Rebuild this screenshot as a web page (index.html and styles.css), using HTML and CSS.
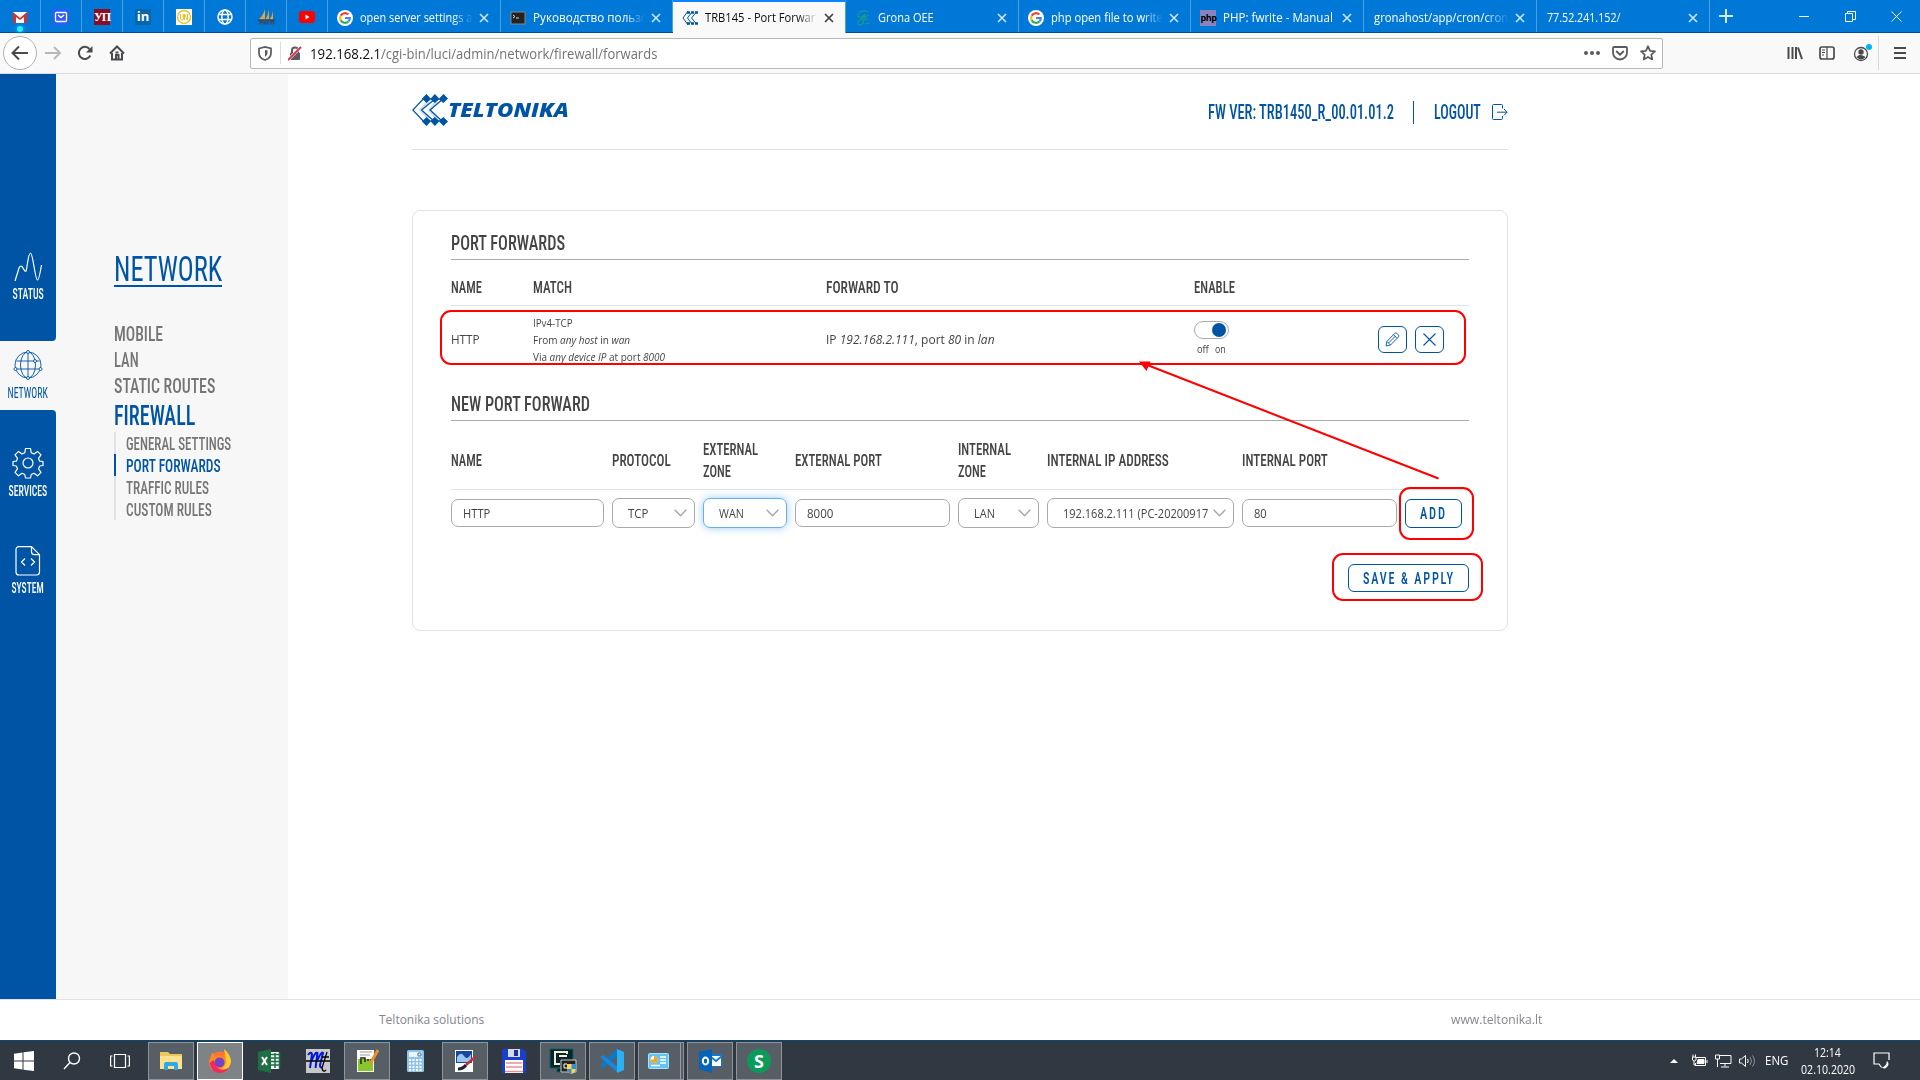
FILE: index.html
```html
<!DOCTYPE html>
<html lang="en">
<head>
<meta charset="utf-8">
<title>TRB145 - Port Forwards</title>
<link rel="stylesheet" href="styles.css">
</head>
<body>
<header class="tabs">
  <div class="pin"><svg width="16" height="16" viewBox="0 0 16 16"><path fill="#fff" d="M1 3h14v11H1z"/><path fill="#d93025" d="M1 3l7 6 7-6v11h-3V8l-4 3-4-3v6H1z"/></svg><i class="glow"></i></div>
  <div class="pin"><svg width="16" height="16" viewBox="0 0 16 16"><rect width="16" height="16" fill="#2a5cff"/><rect x="2.5" y="3.5" width="11" height="9" rx="1" fill="none" stroke="#fff" stroke-width="1.3"/><path d="M5 6l3 2.500 3-2.500" fill="none" stroke="#fff" stroke-width="1.500"/></svg></div>
  <div class="pin"><b class="up">УП</b></div>
  <div class="pin"><b class="in">in</b></div>
  <div class="pin"><svg width="16" height="16" viewBox="0 0 16 16"><rect width="16" height="16" fill="#fff"/><circle cx="8" cy="8" r="6.500" fill="none" stroke="#f0c020" stroke-width="1.400"/><path d="M4.500 5v4q0 2 1.500 2t1.500-2V5M8.500 11V5l3 6V5" fill="none" stroke="#f0c020"/></svg></div>
  <div class="pin"><svg width="16" height="16" viewBox="0 0 16 16" fill="none" stroke="#fff" stroke-width="1.500"><circle cx="8" cy="8" r="7"/><ellipse cx="8" cy="8" rx="3.200" ry="7"/><path d="M1.500 5.500h13M1.500 10.500h13"/></svg></div>
  <div class="pin"><svg width="17" height="16" viewBox="0 0 17 16"><path fill="#f0a030" d="M7 0v10H1q4-3 6-10zM11 0v10H7.700q2.500-4 3.300-10zM15 2v8h-3.300q2.500-3 3.300-8z"/><path d="M0 11.500h17M2 15.500v-3h2v2M6 15.500v-2h2v2M10 12v3.500M13 15.500v-3h2.500v3" stroke="#3c4660" stroke-width="1.300" fill="none"/></svg></div>
  <div class="pin"><svg width="16" height="16" viewBox="0 0 16 16"><rect y="2" width="16" height="12" rx="3" fill="#f00"/><path fill="#fff" d="M6.500 5.500v5L10.500 8z"/></svg></div>
  <div class="tab"><svg class="fav" viewBox="0 0 16 16"><circle cx="8" cy="8" r="8" fill="#fff"/><g fill="none" stroke-width="2.200"><path stroke="#ea4335" d="M3.700 5.800A4.800 4.800 0 0 1 11.400 4.600"/><path stroke="#fbbc05" d="M3.700 5.800a4.800 4.800 0 0 0 0 4.400"/><path stroke="#34a853" d="M3.700 10.200a4.800 4.800 0 0 0 7.700 1.200"/><path stroke="#4285f4" d="M11.400 11.400A4.800 4.800 0 0 0 12.800 8H8"/></g></svg><div class="tt"><span class="f" data-w="112">open server settings a</span></div><svg class="x" viewBox="0 0 10 10"><path d="M1 1l8 8M9 1L1 9"/></svg></div>
  <div class="tab"><svg class="fav" viewBox="0 0 16 16"><rect x="1" y="2" width="14" height="12" fill="#222" stroke="#888"/><path d="M3 5l2 1.500L3 8M6 8h3" stroke="#ddd" fill="none"/></svg><div class="tt"><span class="f" data-w="115">Руководство пользо</span></div><svg class="x" viewBox="0 0 10 10"><path d="M1 1l8 8M9 1L1 9"/></svg></div>
  <div class="tab on"><svg class="fav" viewBox="0 0 16 16" fill="none" stroke="#0054a6"><path d="M6 1L1 8l5 7M10 2L5.500 8l4.500 6M14 2.500L9.500 8l4.500 5.500"/><path d="M5 2.500h11M5 13.500h11" stroke-width="2.500" stroke-dasharray="3 1"/></svg><div class="tt"><span class="f" data-w="110">TRB145 - Port Forwar</span></div><svg class="x" viewBox="0 0 10 10"><path d="M1 1l8 8M9 1L1 9"/></svg></div>
  <div class="tab"><svg class="fav" viewBox="0 0 16 16" fill="none" stroke="#1a9a8c" stroke-width="1.200"><path d="M13 2C7-1 2 3 3 6c1 2 5 1 7-2-1 4-3 5-5 6-3 2-3 5 0 5s4-3 3-5l5-1M10 14l5-1M9 8l4-3"/></svg><div class="tt"><span class="f" data-w="56">Grona OEE</span></div><svg class="x" viewBox="0 0 10 10"><path d="M1 1l8 8M9 1L1 9"/></svg></div>
  <div class="tab"><svg class="fav" viewBox="0 0 16 16"><circle cx="8" cy="8" r="8" fill="#fff"/><g fill="none" stroke-width="2.200"><path stroke="#ea4335" d="M3.700 5.800A4.800 4.800 0 0 1 11.400 4.600"/><path stroke="#fbbc05" d="M3.700 5.800a4.800 4.800 0 0 0 0 4.400"/><path stroke="#34a853" d="M3.700 10.200a4.800 4.800 0 0 0 7.700 1.200"/><path stroke="#4285f4" d="M11.400 11.400A4.800 4.800 0 0 0 12.800 8H8"/></g></svg><div class="tt"><span class="f" data-w="112">php open file to write</span></div><svg class="x" viewBox="0 0 10 10"><path d="M1 1l8 8M9 1L1 9"/></svg></div>
  <div class="tab"><b class="fav php">php</b><div class="tt full"><span class="f" data-w="110">PHP: fwrite - Manual</span></div><svg class="x" viewBox="0 0 10 10"><path d="M1 1l8 8M9 1L1 9"/></svg></div>
  <div class="tab"><div class="tt"><span class="f" data-w="134">gronahost/app/cron/cron</span></div><svg class="x" viewBox="0 0 10 10"><path d="M1 1l8 8M9 1L1 9"/></svg></div>
  <div class="tab"><div class="tt"><span class="f" data-w="73">77.52.241.152/</span></div><svg class="x" viewBox="0 0 10 10"><path d="M1 1l8 8M9 1L1 9"/></svg></div>
  <svg class="plus" width="14" height="14" viewBox="0 0 14 14"><path d="M7 0v14M0 7h14"/></svg>
  <div class="win">
    <svg width="11" height="11" viewBox="0 0 11 11"><path d="M0 5.500h10"/></svg>
    <svg width="11" height="11" viewBox="0 0 11 11"><path d="M.5 2.500h7v8h-7zM2.500 2.500v-2h8v8h-3"/></svg>
    <svg width="11" height="11" viewBox="0 0 11 11"><path d="M.5.5l10 10M10.500.5l-10 10"/></svg>
  </div>
</header>

<nav class="bar">
  <div class="back"><svg width="18" height="16" viewBox="0 0 18 16"><path d="M17 8H2M8 1.500L1.500 8 8 14.500"/></svg></div>
  <svg class="fwd" width="18" height="16" viewBox="0 0 18 16"><path d="M1 8h15M10 2l6 6-6 6"/></svg>
  <svg class="reload" width="16" height="16" viewBox="0 0 16 16"><path d="M13.300 10.500A6 6 0 1 1 12.500 4"/><path d="M15.500 1v6.500H9z" fill="#4a4a4c" stroke="none"/></svg>
  <svg class="home" width="16" height="16" viewBox="0 0 16 16"><path d="M1 8.500L8 1.500l7 7M3 8v6.500h10V8M7 14v-4h2.500v4M6.500 7.500h3"/></svg>
  <div class="url">
    <svg width="14" height="15" viewBox="0 0 14 15"><path d="M1 2.500L7 1l6 1.500V7q0 5-6 7-6-2-6-7z" fill="none" stroke="#5a5a5c" stroke-width="1.700"/><path d="M7 4v7q2.500-1.500 2.500-4V4.500z" fill="#5a5a5c"/></svg>
    <i></i>
    <svg width="14" height="15" viewBox="0 0 14 15"><path d="M4 7V4.500a3 3 0 0 1 6 0V7" fill="none" stroke="#5a5a5c" stroke-width="2"/><rect x="2" y="6.500" width="10" height="7.500" rx="1" fill="#5a5a5c"/><path d="M0 14L13 1" stroke="#fff" stroke-width="3"/><path d="M0 14L13 1" stroke="#e22850" stroke-width="1.800"/></svg>
    <p><span class="f host" data-w="71">192.168.2.1</span><span class="f" data-w="276">/cgi-bin/luci/admin/network/firewall/forwards</span></p>
    <svg width="16" height="16" viewBox="0 0 16 16" fill="#5a5a5c"><circle cx="2" cy="8" r="2"/><circle cx="8" cy="8" r="2"/><circle cx="14" cy="8" r="2"/></svg>
    <svg width="16" height="16" viewBox="0 0 16 16" fill="none" stroke="#5a5a5c" stroke-width="1.800"><path d="M2 2h12q1 0 1 1v4.500a7 7 0 0 1-14 0V3q0-1 1-1zM4.700 6.500L8 9.700l3.300-3.200" stroke-linecap="round"/></svg>
    <svg width="16" height="16" viewBox="0 0 16 16" fill="none" stroke="#5a5a5c" stroke-width="1.700" stroke-linejoin="round"><path d="M8 1.200l2 4.600 5 .5-3.700 3.300 1 4.900L8 12l-4.300 2.500 1-4.900L1 6.300l5-.5z"/></svg>
  </div>
  <div class="tools">
    <svg width="16" height="16" viewBox="0 0 16 16" fill="none" stroke="#4a4a4c" stroke-width="2"><path d="M1.500 2v12M5.500 2v12M9 2v12M11 2.500l4 11.500"/></svg>
    <svg width="16" height="16" viewBox="0 0 16 16" fill="none" stroke="#4a4a4c" stroke-width="1.700"><rect x="1" y="2" width="14" height="12" rx="2"/><path d="M8 2v12M3 5h3M3 7.500h3M3 10h2" stroke-width="1.200"/></svg>
    <svg width="22" height="22" viewBox="0 0 22 22"><circle cx="10" cy="12" r="6.500" fill="none" stroke="#4a4a4c" stroke-width="1.300"/><circle cx="10" cy="10" r="2.700" fill="#4a4a4c"/><path d="M5.500 15q2-2.500 4.500-2t4.500 2q-4.500 5-9 0z" fill="#4a4a4c"/><circle cx="18" cy="5" r="3" fill="#00b3f4"/></svg>
    <i></i>
    <svg width="13" height="14" viewBox="0 0 13 14" stroke="#4a4a4c" stroke-width="2"><path d="M0 2h12M0 7h12M0 12h12"/></svg>
  </div>
</nav>

<div class="page">
  <aside class="rail">
    <div class="rtop"><svg width="30" height="30" viewBox="0 0 30 30"><path d="M2 29L6 16Q8 12 10 16T13 19C14 18 15 1 17.500 1S22 28 24.500 28Q26 28 28.500 13"/></svg><span class="f o" data-w="31">STATUS</span></div>
    <div class="rmid"><svg width="30" height="30" viewBox="0 0 30 30"><circle cx="15" cy="15" r="13"/><ellipse cx="15" cy="15" rx="7.500" ry="13"/><path d="M15 2v26M3.500 11h23M3 19h24"/><g fill="#f7f7f7"><circle cx="15" cy="2" r="1.500"/><circle cx="15" cy="28" r="1.500"/><circle cx="2.500" cy="19" r="1.500"/><circle cx="27.500" cy="19" r="1.500"/><circle cx="22" cy="11" r="1.500"/></g></svg><span class="f o" data-w="40">NETWORK</span></div>
    <div class="rbot">
      <div><svg width="32" height="32" viewBox="-16 -16 32 32"><path stroke-linejoin="round" d="M-2.500-14.500h5l.7 4.200 2.800 1.200 3.500-2.500 3.500 3.500-2.500 3.500 1.200 2.800 3.300.3v4l-3.300.5-1.200 2.800 2.500 3.500-3.500 3.500-3.500-2.500-2.800 1.200-.7 3.500h-5l-.7-3.500-2.800-1.200-3.500 2.500-3.500-3.500 2.500-3.500-1.200-2.800-3.300-.5v-4l3.300-.3 1.200-2.800-2.500-3.500 3.500-3.500 3.500 2.500 2.800-1.200z"/><circle r="5"/></svg><span class="f o" data-w="39">SERVICES</span></div>
      <div><svg width="32" height="30" viewBox="0 0 32 30"><path d="M7 .7h12.500l8 8V26q0 3-3 3H7q-3 0-3-3V3.700Q4 .7 7 .7zM19.500.7v5q0 3 3 3h5M13 12.500L9.500 16l3.500 3.500M19 12.500l3.500 3.500-3.500 3.500"/></svg><span class="f o" data-w="32">SYSTEM</span></div>
    </div>
  </aside>
  <aside class="menu">
    <h1><span class="f o" data-w="108">NETWORK</span></h1>
    <ul>
      <li><span class="f o" data-w="49">MOBILE</span></li>
      <li><span class="f o" data-w="25">LAN</span></li>
      <li><span class="f o" data-w="101">STATIC ROUTES</span></li>
      <li class="big"><span class="f o" data-w="81">FIREWALL</span></li>
    </ul>
    <ul class="sub">
      <li><span class="f o" data-w="105">GENERAL SETTINGS</span></li>
      <li class="cur"><span class="f o" data-w="95">PORT FORWARDS</span></li>
      <li><span class="f o" data-w="83">TRAFFIC RULES</span></li>
      <li><span class="f o" data-w="86">CUSTOM RULES</span></li>
    </ul>
  </aside>
  <main>
    <div class="head">
      <div class="logo">
        <svg width="38" height="32" viewBox="0 0 38 32" fill="none" stroke="#0054a6"><path d="M15 1L.8 16 15 31M23 5L9.500 16 23 28M31 5L18 16l13 12" stroke-width="1.200"/><g fill="#0054a6" stroke="none"><path d="M14.500 0l4.200 4.500 4.200-4.500 4.200 4.500L31.500 0 36 4.500 31.500 9 27 5.500 22.800 9l-4.200-3.500L14.500 9 10 4.500zM14.500 32l4.200-4.500 4.200 4.500 4.200-4.500 4.400 4.500 4.500-4.500-4.500-4.500-4.500 3.500-4.200-3.500-4.200 3.500-4.100-3.500-4.500 4.500z"/><path d="M14 8h4l-7 8 7 8h-4l-7-8zM22.500 8h4l-7 8 7 8h-4l-7-8z" opacity=".2"/></g></svg>
        <span class="f" data-w="121">TELTONIKA</span>
      </div>
      <div class="ver"><span class="f o" data-w="186">FW VER: TRB1450_R_00.01.01.2</span><i></i><span class="f o" data-w="47">LOGOUT</span><svg width="16" height="16" viewBox="0 0 16 16" fill="none" stroke="#0054a6"><path d="M10.500 4.500v-3q0-1-1-1h-8q-1 0-1 1v13q0 1 1 1h8q1 0 1-1V12M5 8.200h10M12 5l3 3.200-3 3.200"/></svg></div>
    </div>
    <section class="card">
      <h2><span class="f o" data-w="114">PORT FORWARDS</span></h2>
      <div class="rules th"><span class="f o" data-w="31">NAME</span><span class="f o" data-w="39">MATCH</span><span class="f o" data-w="73">FORWARD TO</span><span class="f o" data-w="41">ENABLE</span></div>
      <div class="rules tr">
        <div><span class="f" data-w="29">HTTP</span></div>
        <div class="match"><p><span class="f" data-w="40">IPv4-TCP</span></p><p><span class="f" data-w="97">From <em>any host</em> in <em>wan</em></span></p><p><span class="f" data-w="132">Via <em>any device IP</em> at port <em>8000</em></span></p></div>
        <div><span class="f" data-w="169">IP <em>192.168.2.111</em>, port <em>80</em> in <em>lan</em></span></div>
        <div class="sw"><b><i></i></b><p><span class="f" data-w="11.500">off</span><span class="f" data-w="11">on</span></p></div>
        <div class="acts">
          <button class="btn"><svg width="15" height="15" viewBox="0 0 15 15"><path d="M1 14l.8-4.500L10 1.200q.8-.7 1.600 0l2 2q.7.800 0 1.600L5.500 13zM2 9.500L5.500 13M8.500 2.700l3.700 3.700M3.500 11l7-7"/></svg></button>
          <button class="btn"><svg width="15" height="15" viewBox="0 0 15 15"><path d="M1.500 1.500l12 12M13.500 1.500l-12 12" stroke-width="1.100"/></svg></button>
        </div>
      </div>
      <h2 class="new"><span class="f o" data-w="139">NEW PORT FORWARD</span></h2>
      <div class="form th"><span class="f o" data-w="31">NAME</span><span class="f o" data-w="59">PROTOCOL</span><div><span class="f o" data-w="55">EXTERNAL</span><span class="f o" data-w="28">ZONE</span></div><span class="f o" data-w="87">EXTERNAL PORT</span><div><span class="f o" data-w="53">INTERNAL</span><span class="f o" data-w="28">ZONE</span></div><span class="f o" data-w="122">INTERNAL IP ADDRESS</span><span class="f o" data-w="86">INTERNAL PORT</span></div>
      <div class="form fields">
        <div class="inp"><span class="f" data-w="27">HTTP</span></div>
        <div class="sel"><span class="f" data-w="20">TCP</span><svg viewBox="0 0 13 8"><path d="M.7.700l5.800 6 5.800-6"/></svg></div>
        <div class="sel focus"><span class="f" data-w="25">WAN</span><svg viewBox="0 0 13 8"><path d="M.7.700l5.800 6 5.800-6"/></svg></div>
        <div class="inp"><span class="f" data-w="26">8000</span></div>
        <div class="sel"><span class="f" data-w="21">LAN</span><svg viewBox="0 0 13 8"><path d="M.7.700l5.800 6 5.800-6"/></svg></div>
        <div class="sel"><span class="f" data-w="145">192.168.2.111 (PC-20200917</span><svg viewBox="0 0 13 8"><path d="M.7.700l5.800 6 5.800-6"/></svg></div>
        <div class="inp"><span class="f" data-w="13">80</span></div>
        <button class="btn add"><span class="f o" data-w="27">ADD</span></button>
      </div>
      <div class="save"><button class="btn"><span class="f o" data-w="92">SAVE &amp; APPLY</span></button></div>
    </section>
  </main>
</div>
<footer><span class="f" data-w="105">Teltonika solutions</span><span class="f" data-w="91">www.teltonika.lt</span></footer>

<div class="task">
  <div class="slot"><svg width="20" height="20" viewBox="0 0 20 20" fill="#fff"><path d="M0 2.800L8.500 1.500v8H0zM9.500 1.300L20 0v9.500H9.500zM0 10.500h8.500v8L0 17.200zM9.500 10.500H20V20L9.500 18.700z"/></svg></div>
  <div class="slot s2"><svg width="18" height="18" viewBox="0 0 18 18" fill="none" stroke="#fff" stroke-width="1.400"><circle cx="11" cy="6.500" r="5.500"/><path d="M7 10.500L1 17"/></svg></div>
  <div class="slot s3"><svg width="20" height="16" viewBox="0 0 20 16" fill="none" stroke="#fff" stroke-width="1.200"><path d="M4.500 1.500h11v13h-11zM2.500 3H.6v10h1.900M17.500 3h1.900v10h-1.900"/></svg></div>
  <div class="slot app"><svg width="24" height="24" viewBox="0 0 24 24"><path fill="#ecc75c" d="M1 3h8l2 2h12v15H1z"/><path fill="#ffe28d" d="M1 7h22v13H1z"/><path fill="#2fa8e5" d="M5 21v-6q0-2 2-2h10q2 0 2 2v6h-4v-4H9v4z"/></svg></div>
  <div class="slot app act"><svg width="24" height="24" viewBox="0 0 24 24"><circle cx="12" cy="13" r="10.500" fill="#ff7139"/><path d="M3 7Q4 3 5 4l3 4 3-2 4 3q2-6 1-9 6 5 6.500 12-1 9-10 11Q1 23 1 12z" fill="#ff8a1f"/><path d="M16 0q2 6 2 13-1 6-6 7 8 4 11-7Q23 6 16 0z" fill="#ffcb2e"/><circle cx="11.500" cy="13.500" r="5" fill="#7542c9"/><path d="M1.500 14q2 10 11 10 6-1 8-5-11 6-15-8z" fill="#f5275d"/></svg></div>
  <div class="slot"><svg width="24" height="24" viewBox="0 0 24 24"><path fill="#f4f8f5" d="M12 3h11v17H12z"/><path stroke="#1d7044" stroke-width="1.500" d="M13 5.500h9M13 9h9M13 12.500h9M13 16h9M18 4v15M22.500 3v17" fill="none"/><path fill="#1d7044" d="M1 3l13-3v24L1 21z"/><path d="M5 8l5 8M10 8l-5 8" stroke="#fff" stroke-width="2"/></svg></div>
  <div class="slot"><svg width="24" height="24" viewBox="0 0 24 24"><path fill="#c8c8c8" d="M0 0h24v24H0z"/><path d="M2 6q3-4 4-1L4 19M5.500 12q4-10 6-8L9.500 19M11.500 11q4-9 5.500-7l-3 12q0 3 2 2" stroke="#0018d8" stroke-width="2" fill="none"/><path d="M0 12h24M21 3l-5 16q1 5 4 2M16 8h7" stroke="#000" stroke-width="1.300" fill="none"/></svg></div>
  <div class="slot app"><svg width="24" height="24" viewBox="0 0 24 24"><path fill="#fff" d="M2 1h17v22H2z"/><path fill="#87c72c" d="M3 10h15v12H3z"/><path d="M5 3h12M5 6h10" stroke="#999"/><path d="M6 8v7M7 9h3v4M13 10v2M16 10v2" stroke="#222" fill="none" stroke-width="1.500"/><path d="M23 1l-8 14" stroke="#e8932a" stroke-width="3"/></svg></div>
  <div class="slot"><svg width="20" height="24" viewBox="0 0 20 24"><rect x="1" y="1" width="17" height="22" rx="1.500" fill="#8dc4e8"/><path fill="#e8f5ff" d="M3 3h13v5H3z"/><path d="M3 11h13M3 14.500h13M3 18h13M3 21h13" stroke="#fff" stroke-width="2" stroke-dasharray="2 1.500"/><path d="M12 4h3v3h-3z" fill="none" stroke="#3a7bb0"/></svg></div>
  <div class="slot app"><svg width="24" height="24" viewBox="0 0 24 24"><path fill="#fff" d="M2 1h18v22H2z"/><path fill="#1747a0" d="M3 2h16v12H3z"/><path d="M4 8q4-6 7-1t7-2v8H4z" fill="#9cc6ee"/><path d="M5 20q5 0 8-4" stroke="#223" stroke-width="3" fill="none"/><path d="M22 8l-9 8" stroke="#c53030" stroke-width="2.500"/></svg></div>
  <div class="slot disk"><svg width="24" height="24" viewBox="0 0 24 24"><path fill="#1a3fd0" d="M0 0h21l3 3v21H0z"/><path fill="#d8d8e0" d="M6 0h12v8H6z"/><path fill="#1a2f90" d="M12 1h4v6h-4z"/><path fill="#fff" d="M3 11h18v13H3z"/><path d="M4 14h16M4 18h16M3 22.500h18" stroke="#e88f98" stroke-width="1.600"/></svg></div>
  <div class="slot app"><svg width="28" height="28" viewBox="0 0 28 28"><path fill="#06262c" stroke="#0d5f66" d="M1 2h23v19H1zM8 21h8v4H8z"/><path d="M18 7V5H6v12h5M10 9h8" stroke="#f4f0d8" stroke-width="2" fill="none"/><path fill="#222" stroke="#ccc" d="M12 13h15v12H12z"/><path d="M18 17h-3v4h3" stroke="#fff" fill="none"/><path d="M18 17h9v5q-1 4-4.500 5-4-1-4.500-5z" fill="#ffd84a"/><path d="M22.500 17H27v5h-4.500zM18 22h4.500v5Q19 26 18 22z" fill="#2e90df"/></svg></div>
  <div class="slot app"><svg width="24" height="24" viewBox="0 0 24 24"><path fill="#0a79c8" d="M17 0v7L3 19l-3-3z"/><path fill="#1687dc" d="M0 8l3-2 15 12v6z"/><path fill="#2cb0f5" d="M17 0l7 3v18l-7 3z"/></svg></div>
  <div class="slot app stack"><svg width="22" height="18" viewBox="0 0 22 18"><rect x=".5" y="1.500" width="20" height="15" rx="1" fill="#66c5f0" stroke="#a8e0ff"/><circle cx="6" cy="7.500" r="3.500" fill="#fff"/><path d="M6 7.500V4a3.500 3.500 0 1 1-3.500 3.500z" fill="#f4a51c"/><path d="M12 5h6M12 8h6M12 11h6M3 13.500h9" stroke="#fff" stroke-width="1.500"/></svg><i></i></div>
  <div class="slot app"><svg width="24" height="24" viewBox="0 0 24 24"><path fill="#0f7ad4" d="M12 5h12v13H12z"/><path fill="#fff" d="M13 7h10v10H13z"/><path d="M13 8l5 4 6-5" stroke="#0f7ad4" stroke-width="1.800" fill="none"/><path fill="#0364b8" d="M1 3l13-3v24L1 20z"/><ellipse cx="7.500" cy="12" rx="2.700" ry="3.500" fill="none" stroke="#fff" stroke-width="2"/></svg></div>
  <div class="slot app"><b class="s">S</b></div>
  <div class="tray">
    <svg width="8" height="5" viewBox="0 0 8 5"><path fill="#fff" d="M0 5l4-4 4 4z"/></svg>
    <svg width="17" height="14" viewBox="0 0 17 14" fill="none" stroke="#fff"><path d="M5 3.500h9.500v8H4.500V9M16 6v3M1.500 3v3q2 2 3.500 0V3zM2 3V.5M4.500 3V.5M3 7v4h2"/><path fill="#fff" d="M7 5.500h6v4H6z"/></svg>
    <svg width="17" height="14" viewBox="0 0 17 14" fill="none" stroke="#fff"><path d="M5 1.500h11v8H5M.5 1h4v4h-4zM2.500 5v8M10 9.500v3M6 13h8" /></svg>
    <svg width="17" height="14" viewBox="0 0 17 14" fill="none" stroke="#fff"><path d="M.5 5h2l4-3.500v11L2.500 9h-2zM8.500 5q1.500 2 0 4"/><path d="M11 3q3 4 0 8M13.500 1.500q4 5.500 0 11" opacity=".45"/></svg>
    <span class="f" data-w="23">ENG</span>
    <div class="clock"><span class="f" data-w="27">12:14</span><span class="f" data-w="54">02.10.2020</span></div>
    <svg width="17" height="17" viewBox="0 0 17 17" fill="none" stroke="#fff" stroke-width="1.200"><path d="M16 8V1H1v11h5l2.500 3.500"/><path fill="#fff" stroke="none" d="M14 9q3 3 0 6t-5 0q4 0 5-6z"/></svg>
  </div>
</div>

<svg class="marks" width="1920" height="1080" viewBox="0 0 1920 1080"><g fill="none" stroke="#f00" stroke-width="2"><rect x="441" y="311" width="1024" height="53" rx="10"/><rect x="1400" y="488" width="73" height="51" rx="10"/><rect x="1333" y="554" width="149" height="46" rx="10"/><path d="M1438.500 478.500L1146 364.500"/></g><path fill="#f00" d="M1139 361.500l11.500 0-4 9.500z"/></svg>
<script src="fit.js"></script>
</body>
</html>
```
FILE: styles.css
```css
* { box-sizing: border-box; margin: 0; padding: 0; }
body { width: 1920px; height: 1080px; overflow: hidden; background: #fff; font: 12px/17px "Open Sans", "Noto Sans", sans-serif; color: #444; }
ul { list-style: none; }
svg { display: block; flex: none; }
.f { display: inline-block; white-space: pre; transform-origin: 0 50%; flex: none; justify-self: start; }
.o { font-family: Roboto, "Liberation Sans", sans-serif; font-stretch: 75%; font-weight: 500; }

.tabs { height: 33px; background: #0078d7; border-bottom: 1px solid #00508f; display: flex; align-items: stretch; color: #fff; }
.pin { position: relative; width: 41px; border-right: 1px solid #4ba0e4; display: flex; align-items: center; justify-content: center; padding-top: 2px; }
.glow { position: absolute; left: 17px; bottom: 0; width: 6px; height: 6px; border-radius: 50%; background: #2fe6f5; box-shadow: 0 0 4px #00d0ff; }
.up, .in { width: 16px; height: 16px; background: #8c0d22; font: 700 12px/16px "Liberation Serif", serif; text-align: center; letter-spacing: -1px; }
.in { background: #0a66a8; font: 700 13px/15px "Open Sans", sans-serif; letter-spacing: 0; }
.tab { width: 172.7px; border-right: 1px solid #4ba0e4; display: flex; align-items: center; padding: 3px 11px 0 9px; gap: 6px; }
.fav { width: 16px; height: 16px; flex: none; }
.php { background: #8783bd; color: #000; font: 700 9px/15px "Open Sans", sans-serif; text-align: center; letter-spacing: -.5px; }
.tt { flex: 1; min-width: 0; overflow: hidden; padding-left: 1px; height: 20px; line-height: 20px; -webkit-mask-image: linear-gradient(90deg, #000 82%, transparent); mask-image: linear-gradient(90deg, #000 82%, transparent); }
.tt.full { -webkit-mask-image: none; mask-image: none; }
.x { width: 10px; height: 10px; stroke: #cfe5f8; stroke-width: 1.600; }
.on { background: #f9f9fa; color: #0c0c0d; border-top: 2px solid #0a84ff; padding-top: 1px; height: 33px; }
.on .x { stroke: #3a3a3c; }
.plus { margin: 9px 0 0 9px; stroke: #d5e8f8; stroke-width: 2; }
.win { margin-left: auto; display: flex; gap: 35px; padding: 11px 18px 0 0; }
.win svg { fill: none; stroke: #fff; }

.bar { height: 41px; background: #f9f9fa; border-bottom: 1px solid #dcdcde; display: flex; align-items: center; }
.back { width: 34px; height: 34px; margin-left: 3px; border: 1px solid #b1b1b3; border-radius: 50%; background: #fff; display: grid; place-items: center; }
.bar > svg, .back svg { fill: none; stroke: #4a4a4c; stroke-width: 2; }
.bar > .fwd { margin-left: 7px; stroke: #b8b8ba; }
.reload { margin-left: 15px; }
.home { margin-left: 16px; }
.url { width: 1413px; height: 31px; margin-left: 125px; border: 1px solid #b8b8ba; border-radius: 2px; background: #fff; display: flex; align-items: center; padding: 0 6px 0 7px; gap: 12px; }
.url i { width: 1px; height: 22px; background: #dcdcde; margin: 0 -5px 0 -4px; }
.url p { flex: 1; margin-left: -4px; font-size: 14px; color: #737375; white-space: nowrap; }
.url .host { color: #0c0c0d; }
.tools { margin-left: auto; display: flex; align-items: center; gap: 16px; padding-right: 13px; }
.tools i { width: 1px; height: 34px; background: #d8d8da; margin: 0 -1px 0 -11px; }

.page { height: 925px; display: flex; }
.rail { width: 56px; background: #f7f7f7; display: flex; flex-direction: column; font-size: 14px; color: #fff; }
.rail > div, .rbot > div { display: flex; flex-direction: column; align-items: center; }
.rail svg { fill: none; stroke: #fff; stroke-width: 1.200; }
.rail .f { line-height: 16px; font-weight: 500; transform-origin: 50% 50%; }
.rail .rtop { height: 267px; background: #0054a6; border-radius: 0 0 4px 0; padding-top: 178px; gap: 4px; }
.rail .rmid { height: 69px; color: #0054a6; padding-top: 9px; gap: 5px; }
.rail .rmid .f { font-weight: 400; }
.rail .rmid svg { stroke: #0054a6; stroke-width: .9; }
.rail .rbot { flex: 1; background: #0054a6; border-radius: 0 4px 0 0; padding-top: 37px; gap: 47px; }
.rbot > div { gap: 4px; }
.menu { width: 232px; background: #f7f7f7; padding: 175px 0 0 58px; color: #757575; }
.menu h1 { width: 108px; height: 38px; border-bottom: 2px solid #0054a6; color: #0054a6; font-size: 35px; line-height: 38px; font-weight: 400; margin-bottom: 34px; }
.menu h1 .f { font-weight: 400; }
.menu li { height: 26px; line-height: 24px; font-size: 21px; }
.menu .big { height: 33px; line-height: 31px; font-size: 27px; color: #0054a6; }
.menu .sub { border-left: 2px solid #e2e2e2; }
.sub li { height: 22px; line-height: 22px; font-size: 17.500px; padding-left: 10px; }
.sub .cur { color: #0054a6; border-left: 2px solid #0054a6; margin-left: -2px; }

main { width: 1096px; margin-left: 124px; }
.head { height: 76px; border-bottom: 1px solid #e2e2e2; display: flex; justify-content: space-between; }
.logo { display: flex; align-items: center; height: 32px; margin-top: 20px; color: #0054a6; font: italic 800 19px/32px "Open Sans", sans-serif; }
.logo .f { margin-left: -2px; }
.ver { display: flex; height: 24px; margin-top: 26px; line-height: 24px; font-size: 20px; color: #0054a6; align-items: center; }
.ver i { width: 1px; height: 23px; background: #0054a6; margin: 0 20px 0 19px; }
.ver svg { margin-left: 11px; }
.card { margin-top: 60px; height: 421px; border: 1px solid #e4e4e4; border-radius: 8px; padding: 14px 38px 0; }
.card h2 { height: 35px; border-bottom: 1px solid #a9a9a9; font-size: 21px; line-height: 34px; font-weight: 400; }
.th { font-size: 17px; line-height: 22px; border-bottom: 1px solid #e2e2e2; align-items: center; }
.rules { display: grid; grid-template-columns: 82px 293px 368px 184px 1fr; }
.rules.th { height: 46px; align-items: start; padding-top: 16px; }
.rules.tr { height: 66px; align-items: center; font-size: 12.500px; }
.match { font-size: 10.500px; margin-top: 2px; }
.match p, .sw p { display: flex; }
.sw b { display: block; width: 35px; height: 18px; border: 1px solid #aaa; border-radius: 9px; padding: 1px 2px; }
.sw i { display: block; margin-left: auto; width: 14px; height: 14px; border-radius: 50%; background: #0054a6; }
.sw p { gap: 6px; padding: 2px 0 0 3px; font-size: 10.500px; }
.acts { display: flex; gap: 8px; }
.btn { height: 28px; border: 1px solid #0054a6; border-radius: 6px; background: #fff; color: #0054a6; display: flex; align-items: center; justify-content: center; font-size: 17px; line-height: 20px; }
.acts .btn { width: 29px; height: 27px; }
.acts svg { fill: none; stroke: #0054a6; stroke-width: .9; }
.card .new { margin-top: 14px; }
.form { display: grid; grid-template-columns: 153px 83px 84px 155px 81px 187px 155px 57px; column-gap: 8px; }
.form.th { height: 69px; padding-top: 10px; }
.form.th div { display: flex; flex-direction: column; }
.form.th div .f { align-self: flex-start; }
.fields { padding-top: 8px; align-items: center; }
.inp, .sel { height: 28px; border: 1px solid #a9a9a9; border-radius: 7px; display: flex; align-items: center; padding: 0 11px; }
.sel { height: 30px; justify-content: space-between; padding: 0 7px 0 15px; }
.sel svg { width: 13px; height: 8px; fill: none; stroke: #a9a9a9; stroke-width: 1.500; }
.focus { border-color: #66afe9; box-shadow: 0 0 8px rgba(102, 175, 233, .65); }
.fields .btn { height: 29px; }
.btn .o { letter-spacing: 2.500px; }
.save { display: flex; justify-content: flex-end; padding-top: 36px; }
.save .btn { width: 121px; }

footer { height: 41px; border-top: 1px solid #e2e2e2; display: flex; justify-content: space-between; padding: 11px 378px 0 379px; color: #85858f; }

.task { height: 40px; background: #303842; border-top: 1px solid #004a80; display: flex; align-items: center; padding-left: 1px; }
.slot { width: 46px; height: 38px; margin-right: 3px; display: grid; place-items: center; flex: none; }
.s2 { padding-right: 2px; }
.s3 { padding-right: 4px; }
.app { background: #585e65; border: 1px solid #8f9498; }
.act { background: #7e8388; border: 1px solid #fff; }
.stack { grid-template-columns: 40px 4px; }
.stack i { height: 36px; width: 3px; border-left: 1px solid #9a9ea2; }
.s { width: 24px; height: 24px; border-radius: 50%; background: #0c9a5c; color: #fff; font-size: 18px; line-height: 24px; text-align: center; }
.tray { margin-left: auto; display: flex; align-items: center; color: #fff; padding-right: 30px; }
.tray > svg:nth-child(1) { margin-right: 13px; }
.tray > svg:nth-child(2), .tray > svg:nth-child(3) { margin-right: 7px; }
.tray > svg:nth-child(4) { margin-right: 9px; }
.clock { width: 54px; margin: 0 18px 0 13px; display: flex; flex-direction: column; align-items: flex-start; }
.clock .f:first-child { margin-left: 13px; }

.marks { position: absolute; left: 0; top: 0; pointer-events: none; }
```
FILE: fit.js
```js
// Condense each label to its designed width.
var list = Array.prototype.map.call(document.querySelectorAll('.f'), function (el) {
  return { el: el, target: parseFloat(el.dataset.w), natural: el.offsetWidth, centred: getComputedStyle(el.parentElement).alignItems === 'center' && getComputedStyle(el.parentElement).flexDirection === 'column' };
});
list.forEach(function (t) {
  t.el.style.transform = 'scaleX(' + t.target / t.natural + ')';
  if (!t.centred) t.el.style.marginRight = (t.target - t.natural) + 'px';
});
```
